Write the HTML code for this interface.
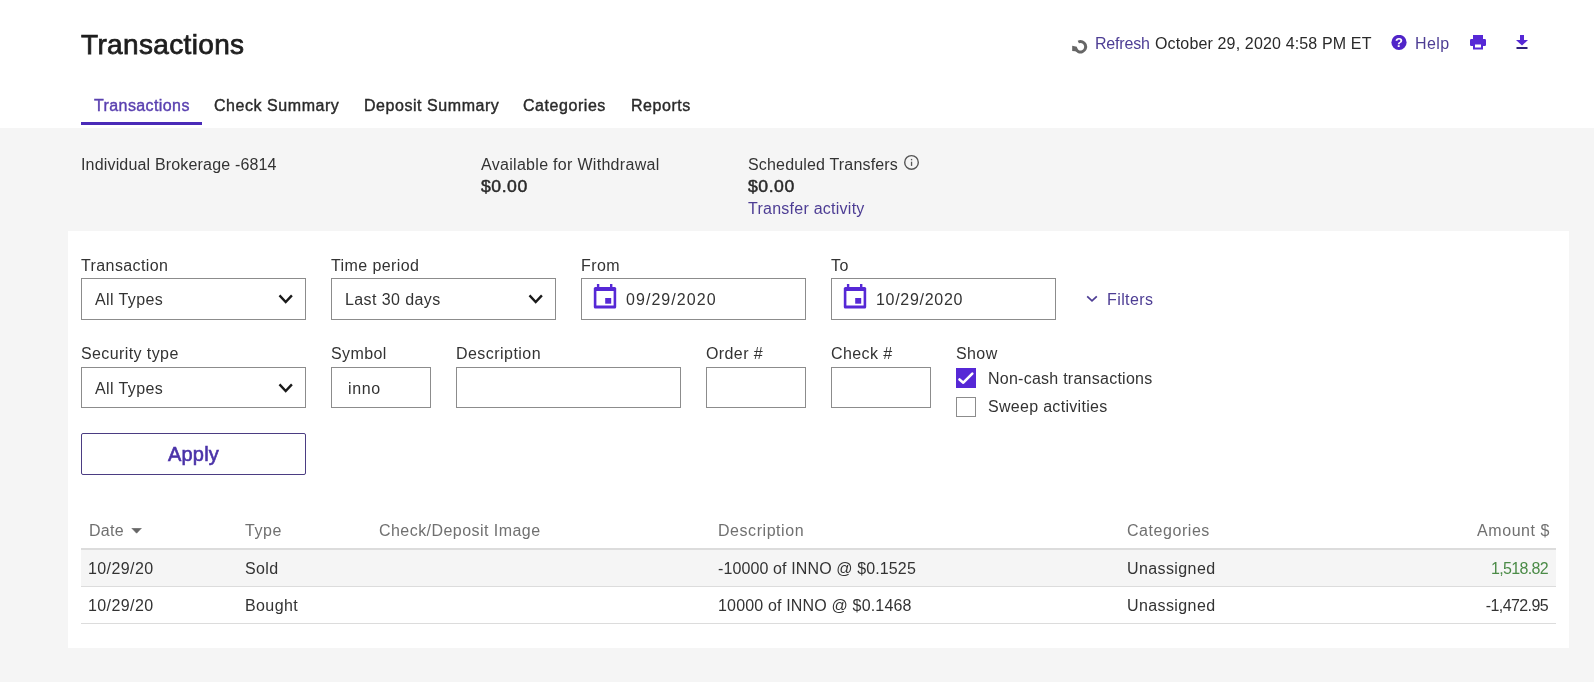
<!DOCTYPE html>
<html><head><meta charset="utf-8">
<style>
*{box-sizing:border-box;margin:0;padding:0}
html,body{-webkit-font-smoothing:antialiased;width:1594px;height:682px;overflow:hidden;background:#f5f5f5;font-family:"Liberation Sans",sans-serif;color:#333}
.a{position:absolute;white-space:nowrap;font-size:16px;line-height:18px;letter-spacing:0.4px}
#hdr{position:absolute;left:0;top:0;width:1594px;height:128px;background:#fff}
.tab{position:absolute;top:97px;font-size:16px;line-height:18px;letter-spacing:0.55px;color:#2a2a2a;-webkit-text-stroke:0.4px #2a2a2a;white-space:nowrap}
#panel{position:absolute;left:68px;top:231px;width:1501px;height:417px;background:#fff}
.box{position:absolute;border:1px solid #8c8c8c;background:#fff}
.th{position:absolute;top:522px;font-size:16px;line-height:18px;letter-spacing:0.55px;color:#707070;white-space:nowrap}
.pl{color:#4d3d94}
.ic{position:absolute}
</style></head><body><div id="root" style="position:absolute;left:0;top:0;width:1594px;height:682px;will-change:transform">
<div id="hdr"></div>
<div class="a" style="left:81px;top:29px;font-size:28px;line-height:32px;letter-spacing:0.35px;color:#1e1e1e;-webkit-text-stroke:0.75px #1e1e1e">Transactions</div>

<!-- header right -->
<svg class="ic" style="left:1070px;top:38px" width="20" height="18" viewBox="0 0 20 18"><path d="M8.3 4A5.2 5.2 0 1 1 5.6 10.6" fill="none" stroke="#666" stroke-width="3"/><path d="M2.2 7.8L6.8 8.8L8.2 13.6L2.2 13z" fill="#666"/></svg>
<div class="a" style="left:1095px;top:35px;letter-spacing:-0.2px;color:#4d3d94">Refresh</div><div class="a" style="left:1155px;top:35px;letter-spacing:0.15px;color:#2a2a2a">October 29, 2020 4:58 PM ET</div>
<svg class="ic" style="left:1391px;top:35px" width="16" height="16" viewBox="0 0 16 16"><circle cx="8" cy="7.4" r="7.6" fill="#5024c8"/><text x="8" y="12.3" text-anchor="middle" font-family="Liberation Sans" font-weight="bold" font-size="13" fill="#fff">?</text></svg>
<div class="a" style="left:1415px;top:35px;color:#4d3d94">Help</div>
<svg class="ic" style="left:1470px;top:35px" width="16" height="15" viewBox="0 0 16 15"><rect x="3" y="0" width="10" height="4.5" fill="#5628d6"/><rect x="0" y="4" width="16" height="7" rx="1.2" fill="#5628d6"/><rect x="3" y="9" width="10" height="5.5" fill="#5628d6"/><rect x="5" y="9.5" width="6" height="3" fill="#fff"/></svg>
<svg class="ic" style="left:1516px;top:35px" width="12" height="14" viewBox="0 0 12 14"><rect x="4" y="0" width="4" height="5.5" fill="#5628d6"/><path d="M0 5h12l-6 5.5z" fill="#5628d6"/><rect x="0.5" y="12" width="11" height="2" fill="#2e1f7a"/></svg>

<!-- tabs -->
<div class="tab" style="left:94px;letter-spacing:0.4px;color:#5a40b0;-webkit-text-stroke:0.4px #5a40b0">Transactions</div>
<div class="tab" style="left:214px">Check Summary</div>
<div class="tab" style="left:364px">Deposit Summary</div>
<div class="tab" style="left:523px">Categories</div>
<div class="tab" style="left:631px">Reports</div>
<div class="ic" style="left:81px;top:122px;width:121px;height:3px;background:#4a2bb8"></div>

<!-- summary -->
<div class="a" style="left:81px;top:156px;letter-spacing:0.17px">Individual Brokerage -6814</div>
<div class="a" style="left:481px;top:156px;letter-spacing:0.3px">Available for Withdrawal</div>
<div class="a" style="left:481px;top:178px;font-size:16px;letter-spacing:0.5px;color:#2a2a2a;-webkit-text-stroke:0.45px #2a2a2a;transform:scaleX(1.1);transform-origin:0 0">$0.00</div>
<div class="a" style="left:748px;top:156px;letter-spacing:0.17px">Scheduled Transfers</div>
<svg class="ic" style="left:903px;top:154px" width="17" height="17" viewBox="0 0 17 17"><circle cx="8.5" cy="8.4" r="6.8" fill="none" stroke="#555" stroke-width="1.4"/><rect x="7.9" y="7.7" width="1.3" height="4.2" fill="#555"/><rect x="7.9" y="4.9" width="1.3" height="1.4" fill="#555"/></svg>
<div class="a" style="left:748px;top:178px;font-size:16px;letter-spacing:0.5px;color:#2a2a2a;-webkit-text-stroke:0.45px #2a2a2a;transform:scaleX(1.1);transform-origin:0 0">$0.00</div>
<div class="a pl" style="left:748px;top:200px;letter-spacing:0.25px">Transfer activity</div>

<div id="panel"></div>

<!-- form row 1 -->
<div class="a" style="left:81px;top:257px">Transaction</div>
<div class="box" style="left:81px;top:278px;width:225px;height:42px"></div>
<div class="a" style="left:95px;top:291px">All Types</div>
<svg class="ic" style="left:277px;top:293px" width="16" height="12" viewBox="0 0 16 12"><path d="M2.5 2.4l6.2 6.6 6.2-6.6" fill="none" stroke="#1a1a1a" stroke-width="2.4"/></svg>

<div class="a" style="left:331px;top:257px">Time period</div>
<div class="box" style="left:331px;top:278px;width:225px;height:42px"></div>
<div class="a" style="left:345px;top:291px">Last 30 days</div>
<svg class="ic" style="left:527px;top:293px" width="16" height="12" viewBox="0 0 16 12"><path d="M2.5 2.4l6.2 6.6 6.2-6.6" fill="none" stroke="#1a1a1a" stroke-width="2.4"/></svg>

<div class="a" style="left:581px;top:257px">From</div>
<div class="box" style="left:581px;top:278px;width:225px;height:42px"></div>
<svg class="ic" style="left:593px;top:284px" width="24" height="25" viewBox="0 0 24 25"><rect x="3.9" y="0" width="2.4" height="4" fill="#5628d6"/><rect x="17" y="0" width="2.4" height="4" fill="#5628d6"/><rect x="0.8" y="3" width="22.4" height="21.5" rx="1.5" fill="#5628d6"/><rect x="3.4" y="7" width="17.2" height="14.5" fill="#fff"/><rect x="12.2" y="14" width="6" height="5.7" fill="#5628d6"/></svg>
<div class="a" style="left:626px;top:291px;letter-spacing:1.05px">09/29/2020</div>

<div class="a" style="left:831px;top:257px">To</div>
<div class="box" style="left:831px;top:278px;width:225px;height:42px"></div>
<svg class="ic" style="left:843px;top:284px" width="24" height="25" viewBox="0 0 24 25"><rect x="3.9" y="0" width="2.4" height="4" fill="#5628d6"/><rect x="17" y="0" width="2.4" height="4" fill="#5628d6"/><rect x="0.8" y="3" width="22.4" height="21.5" rx="1.5" fill="#5628d6"/><rect x="3.4" y="7" width="17.2" height="14.5" fill="#fff"/><rect x="12.2" y="14" width="6" height="5.7" fill="#5628d6"/></svg>
<div class="a" style="left:876px;top:291px;letter-spacing:0.7px">10/29/2020</div>

<svg class="ic" style="left:1086px;top:295px" width="12" height="8" viewBox="0 0 12 8"><path d="M1.2 1.3l4.8 4.6 4.8-4.6" fill="none" stroke="#4d3d94" stroke-width="1.7"/></svg>
<div class="a pl" style="left:1107px;top:291px">Filters</div>

<!-- form row 2 -->
<div class="a" style="left:81px;top:345px">Security type</div>
<div class="box" style="left:81px;top:367px;width:225px;height:41px"></div>
<div class="a" style="left:95px;top:380px">All Types</div>
<svg class="ic" style="left:277px;top:382px" width="16" height="12" viewBox="0 0 16 12"><path d="M2.5 2.4l6.2 6.6 6.2-6.6" fill="none" stroke="#1a1a1a" stroke-width="2.4"/></svg>

<div class="a" style="left:331px;top:345px">Symbol</div>
<div class="box" style="left:331px;top:367px;width:100px;height:41px"></div>
<div class="a" style="left:348px;top:380px;letter-spacing:0.6px">inno</div>

<div class="a" style="left:456px;top:345px;letter-spacing:0.45px">Description</div>
<div class="box" style="left:456px;top:367px;width:225px;height:41px"></div>

<div class="a" style="left:706px;top:345px">Order #</div>
<div class="box" style="left:706px;top:367px;width:100px;height:41px"></div>

<div class="a" style="left:831px;top:345px">Check #</div>
<div class="box" style="left:831px;top:367px;width:100px;height:41px"></div>

<div class="a" style="left:956px;top:345px">Show</div>
<div class="ic" style="left:956px;top:368px;width:20px;height:20px;background:#5628d6"></div>
<svg class="ic" style="left:956px;top:368px" width="20" height="20" viewBox="0 0 20 20"><path d="M3.5 11.5l3.8 3.2 9-9" fill="none" stroke="#fff" stroke-width="2.6" stroke-linecap="round" stroke-linejoin="round"/></svg>
<div class="a" style="left:988px;top:370px;letter-spacing:0.25px">Non-cash transactions</div>
<div class="box" style="left:956px;top:397px;width:20px;height:20px"></div>
<div class="a" style="left:988px;top:398px;letter-spacing:0.3px">Sweep activities</div>

<div class="ic" style="left:81px;top:433px;width:225px;height:42px;border:1px solid #4b3d82;border-radius:2px"></div>
<div class="a" style="left:81px;top:443px;width:225px;text-align:center;font-size:20px;line-height:22px;letter-spacing:0.2px;color:#4a32a8;-webkit-text-stroke:0.6px #4a32a8">Apply</div>

<!-- table -->
<div class="th" style="left:89px;letter-spacing:0.3px">Date</div>
<svg class="ic" style="left:131px;top:528px" width="11" height="6" viewBox="0 0 11 6"><path d="M0.8 0.2h9.6l-4.8 5z" fill="#666" stroke="#666" stroke-width="0.6" stroke-linejoin="round"/></svg>
<div class="th" style="left:245px">Type</div>
<div class="th" style="left:379px;letter-spacing:0.45px">Check/Deposit Image</div>
<div class="th" style="left:718px">Description</div>
<div class="th" style="left:1127px">Categories</div>
<div class="th" style="left:1350px;width:200px;text-align:right">Amount $</div>
<div class="ic" style="left:81px;top:548px;width:1475px;height:2px;background:#dcdcdc"></div>
<div class="ic" style="left:81px;top:550px;width:1475px;height:36px;background:#f5f5f5"></div>
<div class="ic" style="left:81px;top:586px;width:1475px;height:1px;background:#dcdcdc"></div>
<div class="ic" style="left:81px;top:623px;width:1475px;height:1px;background:#dcdcdc"></div>

<div class="a" style="left:88px;top:560px">10/29/20</div>
<div class="a" style="left:245px;top:560px">Sold</div>
<div class="a" style="left:718px;top:560px;letter-spacing:0.12px">-10000 of INNO @ $0.1525</div>
<div class="a" style="left:1127px;top:560px">Unassigned</div>
<div class="a" style="left:1348px;top:560px;width:200px;text-align:right;color:#4b8b47;letter-spacing:-0.65px">1,518.82</div>

<div class="a" style="left:88px;top:597px">10/29/20</div>
<div class="a" style="left:245px;top:597px">Bought</div>
<div class="a" style="left:718px;top:597px;letter-spacing:0.17px">10000 of INNO @ $0.1468</div>
<div class="a" style="left:1127px;top:597px">Unassigned</div>
<div class="a" style="left:1348px;top:597px;width:200px;text-align:right;letter-spacing:-0.6px">-1,472.95</div>
</div></body></html>
